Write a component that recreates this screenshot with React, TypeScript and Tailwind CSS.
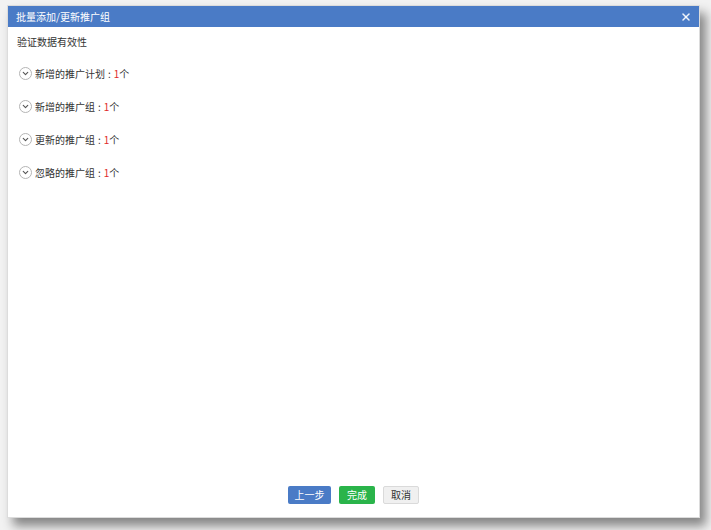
import { ChevronDown, X } from "lucide-react";

const items = [
  { label: "新增的推广计划", count: 1 },
  { label: "新增的推广组", count: 1 },
  { label: "更新的推广组", count: 1 },
  { label: "忽略的推广组", count: 1 },
];

export default function App() {
  return (
    <div
      className="w-[711px] h-[530px] bg-[#f2f2f2] pt-[5px] pl-[7px] overflow-hidden"
      style={{ fontFamily: '"Microsoft YaHei", "Noto Sans CJK SC", sans-serif' }}
    >
      <div className="w-[693px] h-[513px] bg-white flex flex-col border border-[#dcdcdc] shadow-[6px_8px_10px_rgba(0,0,0,0.45)]">
        {/* Header */}
        <div className="h-[21px] bg-[#4a7bc6] flex items-center justify-between pl-[8px] pr-[7px] shrink-0">
          <span className="text-[10px] text-white leading-none">批量添加/更新推广组</span>
          <X size={12} strokeWidth={3} className="text-white/90" />
        </div>

        {/* Body */}
        <div className="flex-1 flex flex-col px-[9px] pt-[8px]">
          <div className="text-[10px] text-[#333] leading-[14px]">验证数据有效性</div>
          <div className="flex flex-col gap-[19px] pt-[17px] pl-[2px]">
            {items.map((it) => (
              <div key={it.label} className="flex items-center h-[14px]">
                <span className="w-[13px] h-[13px] rounded-full border border-[#b5b5b5] flex items-center justify-center mr-[3px]">
                  <ChevronDown size={9} strokeWidth={3} className="text-[#555]" />
                </span>
                <span className="text-[10px] text-[#333]">{it.label}</span>
                <span className="text-[10px] text-[#333] mx-[3px]">:</span>
                <span className="text-[10px] text-[#e02a2a]">{it.count}</span>
                <span className="text-[10px] text-[#333]">个</span>
              </div>
            ))}
          </div>
        </div>

        {/* Footer */}
        <div className="flex justify-center gap-[8px] pb-[13px]">
          <button className="h-[18px] w-[43px] rounded-[2px] bg-[#4a7bc6] text-white text-[10px] leading-none">上一步</button>
          <button className="h-[18px] w-[36px] rounded-[2px] bg-[#2ab44a] text-white text-[10px] leading-none">完成</button>
          <button className="h-[18px] w-[36px] rounded-[2px] bg-[#f0f0f0] border border-[#dadada] text-[#333] text-[10px] leading-none">取消</button>
        </div>
      </div>
    </div>
  );
}
